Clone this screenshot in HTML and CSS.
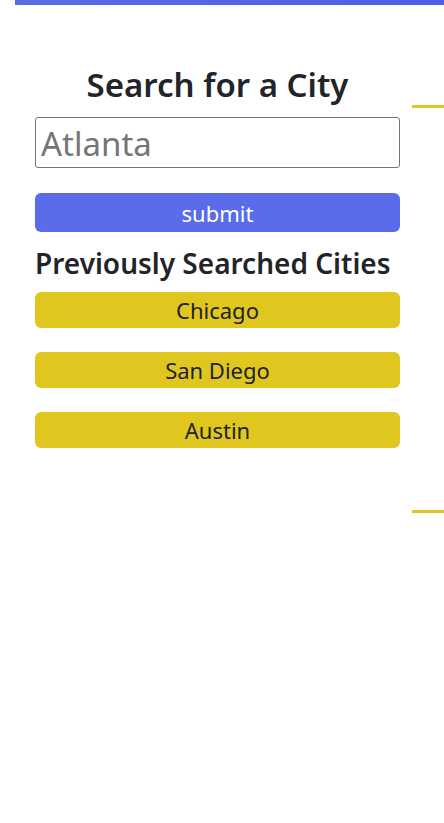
FILE: index.html
```html
<!DOCTYPE html>
<html lang="en">
<head>
<meta charset="utf-8">
<title>Weather Dashboard</title>
<link rel="stylesheet" href="styles.css">
</head>
<body>
<div class="topbar"></div>
<div class="page">
  <aside class="sidebar">
    <h2 class="title">Search for a City</h2>
    <input class="city-input" type="text" placeholder="Atlanta">
    <button class="submit-btn" type="button">submit</button>
    <h3 class="history-title">Previously Searched Cities</h3>
    <div class="history">
      <button class="city-btn" type="button">Chicago</button>
      <button class="city-btn" type="button">San Diego</button>
      <button class="city-btn" type="button">Austin</button>
    </div>
  </aside>
  <section class="forecast"></section>
</div>
</body>
</html>
```

FILE: styles.css
```css
html, body {
  margin: 0;
  padding: 0;
  background: #fff;
  overflow: hidden;
}
body {
  font-family: "Noto Sans", "Open Sans", sans-serif;
  color: #212529;
}
.topbar {
  margin-left: 15px;
  height: 5px;
  background: linear-gradient(90deg, #5a6be4, #4f5fe6);
}
.page {
  display: flex;
  align-items: flex-start;
  padding-top: 60px;
}
.sidebar {
  flex: 0 0 365px;
  min-width: 0;
  margin-left: 35px;
  display: flex;
  flex-direction: column;
}
.title {
  margin: 0 0 12px;
  font-size: 33px;
  line-height: 40px;
  font-weight: 600;
  text-align: center;
}
.city-input {
  box-sizing: border-box;
  width: 100%;
  min-width: 0;
  height: 51px;
  margin: 0;
  padding: 2px 5px 0;
  border: 1px solid #767676;
  border-radius: 3px;
  font-family: inherit;
  font-size: 33px;
  color: #333;
}
.city-input::placeholder {
  color: #757575;
}
.submit-btn {
  margin-top: 25px;
  height: 39px;
  border: 0;
  border-radius: 6px;
  background: #5a6ce9;
  color: #fff;
  font-family: inherit;
  font-size: 22px;
  padding: 0;
}
.history-title {
  margin: 14px 0 0;
  font-size: 28px;
  line-height: 34px;
  font-weight: 600;
}
.history {
  display: flex;
  flex-direction: column;
  gap: 24px;
  margin-top: 12px;
}
.city-btn {
  height: 36px;
  border: 0;
  border-radius: 6px;
  background: #dfc720;
  color: #222;
  font-family: inherit;
  font-size: 22px;
  padding: 0;
}
.forecast {
  flex: 1 1 auto;
  min-width: 0;
  margin-left: 12px;
  margin-top: 40px;
  height: 402px;
  border-top: 3px solid #dfc720;
  border-bottom: 3px solid #dfc720;
}
```
